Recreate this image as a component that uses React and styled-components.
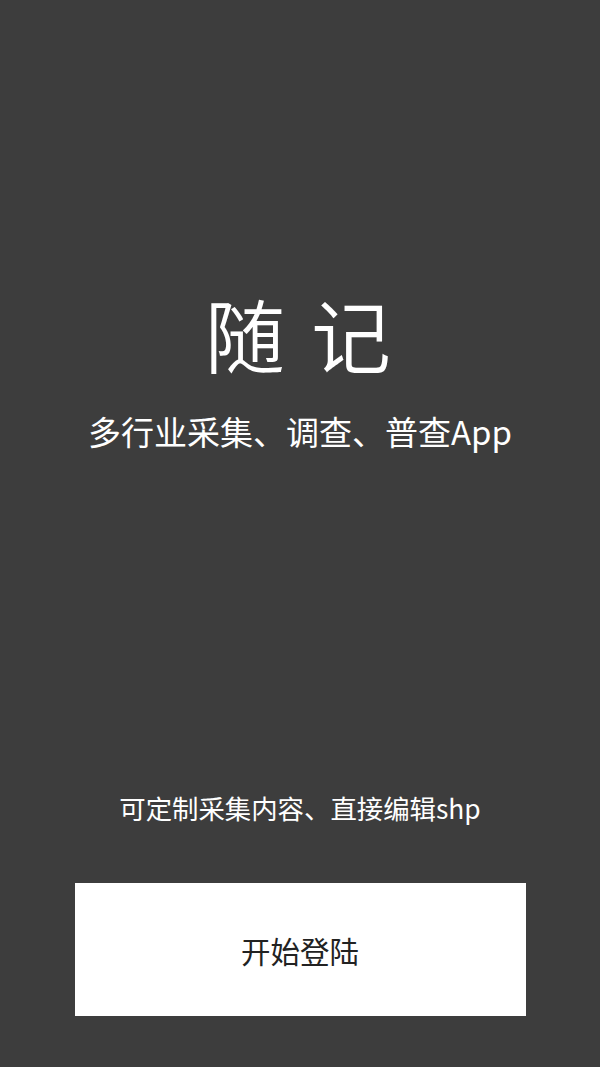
import React from "react";
import styled, { createGlobalStyle } from "styled-components";

const GlobalStyle = createGlobalStyle`
  html, body {
    margin: 0;
    padding: 0;
    background: #3d3d3d;
  }
  * {
    box-sizing: border-box;
  }
`;

const Page = styled.div`
  display: flex;
  flex-direction: column;
  align-items: center;
  min-height: 1067px;
  padding: 292px 0 51px;
  background: #3d3d3d;
  font-family: "Noto Sans CJK SC", "Noto Sans", sans-serif;
  color: #ffffff;
`;

const Title = styled.h1`
  margin: 0;
  font-size: 80px;
  line-height: 80px;
  font-weight: 350;
  letter-spacing: 4px;
  white-space: pre;
`;

const Subtitle = styled.div`
  margin-top: 43px;
  font-size: 33px;
  line-height: 33px;
  font-weight: 400;
`;

const Spacer = styled.div`
  flex: 1;
`;

const Note = styled.div`
  font-size: 26.4px;
  line-height: 26px;
  margin-bottom: 62px;
`;

const StartButton = styled.button`
  display: flex;
  align-items: center;
  justify-content: center;
  width: 451px;
  height: 133px;
  border: none;
  border-radius: 0;
  background: #ffffff;
  color: #222222;
  font-family: inherit;
  font-size: 29.5px;
  cursor: pointer;
`;

const App = () => {
  return (
    <React.Fragment>
      <GlobalStyle />
      <Page>
        <Title>随 记</Title>
        <Subtitle>多行业采集、调查、普查App</Subtitle>
        <Spacer />
        <Note>可定制采集内容、直接编辑shp</Note>
        <StartButton>开始登陆</StartButton>
      </Page>
    </React.Fragment>
  );
};

export default App;
